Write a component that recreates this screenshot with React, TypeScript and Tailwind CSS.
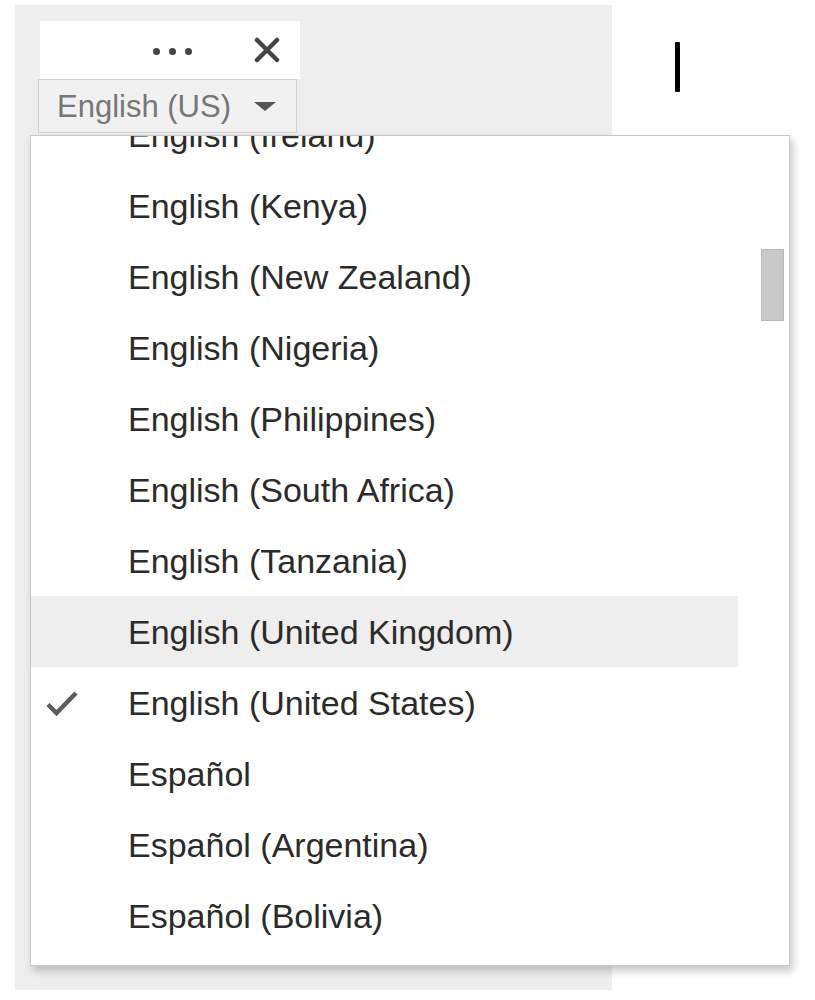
import React from 'react';

const languages = [
  'English (Ireland)',
  'English (Kenya)',
  'English (New Zealand)',
  'English (Nigeria)',
  'English (Philippines)',
  'English (South Africa)',
  'English (Tanzania)',
  'English (United Kingdom)',
  'English (United States)',
  'Español',
  'Español (Argentina)',
  'Español (Bolivia)',
];

const hovered = 'English (United Kingdom)';
const selected = 'English (United States)';

function CheckIcon() {
  return (
    <svg width="34" height="28" viewBox="0 0 34 28" fill="none">
      <path d="M3 15.5 L11.5 24 L31 4" stroke="#5c5c5c" strokeWidth="4.5" strokeLinecap="butt" strokeLinejoin="miter" />
    </svg>
  );
}

export default function App() {
  return (
    <div className="min-h-screen bg-white font-['Liberation_Sans',Arial,sans-serif] flex items-start">
      {/* gray side panel */}
      <div className="ml-[15px] mt-[5px] w-[597px] h-[985px] bg-[#eeeeee] pt-[16px]">
        {/* toolbar */}
        <div className="ml-[25px] w-[260px] h-[58px] bg-white flex items-center">
          <div className="ml-[113px] flex items-center gap-[9px] mt-[2px]">
            <span className="w-[7px] h-[7px] rounded-full bg-[#444]" />
            <span className="w-[7px] h-[7px] rounded-full bg-[#444]" />
            <span className="w-[7px] h-[7px] rounded-full bg-[#444]" />
          </div>
          <svg className="ml-[62px]" width="26" height="26" viewBox="0 0 26 26">
            <path d="M3 3 L23 23 M23 3 L3 23" stroke="#444" strokeWidth="4.5" strokeLinecap="round" />
          </svg>
        </div>

        {/* language select + dropdown */}
        <div className="relative ml-[23px] w-[259px]">
          <button className="w-full h-[54px] bg-[#f1f1f1] border border-[#d2d2d2] flex items-center pl-[18px] pr-[20px]">
            <span className="text-[31px] text-[#777] leading-none">English (US)</span>
            <svg className="ml-auto" width="22" height="9" viewBox="0 0 22 9">
              <path d="M0 0 L22 0 L11 9 Z" fill="#555" />
            </svg>
          </button>

          <div className="absolute left-[-8px] top-[56px] w-[760px] h-[831px] bg-white border border-[#c8c8c8] shadow-[3px_5px_8px_rgba(0,0,0,0.22)] overflow-hidden z-10">
            <div className="-mt-[37px]">
              {languages.map((lang) => (
                <div
                  key={lang}
                  className={`h-[71px] mr-[51px] flex items-center ${lang === hovered ? 'bg-[#eeeeee]' : ''}`}
                >
                  <div className="w-[97px] pl-[14px] flex items-center">
                    {lang === selected && <CheckIcon />}
                  </div>
                  <span className="text-[34px] text-[#2b2b2b] leading-none whitespace-nowrap">{lang}</span>
                </div>
              ))}
            </div>
            {/* scrollbar thumb */}
            <div className="absolute right-[5px] top-[113px] w-[23px] h-[72px] bg-[#c9c9c9] border border-[#b8b8b8]" />
          </div>
        </div>
      </div>

      {/* text cursor */}
      <div className="ml-[63px] mt-[42px] w-[5px] h-[50px] bg-black rounded-[1px]" />
    </div>
  );
}
